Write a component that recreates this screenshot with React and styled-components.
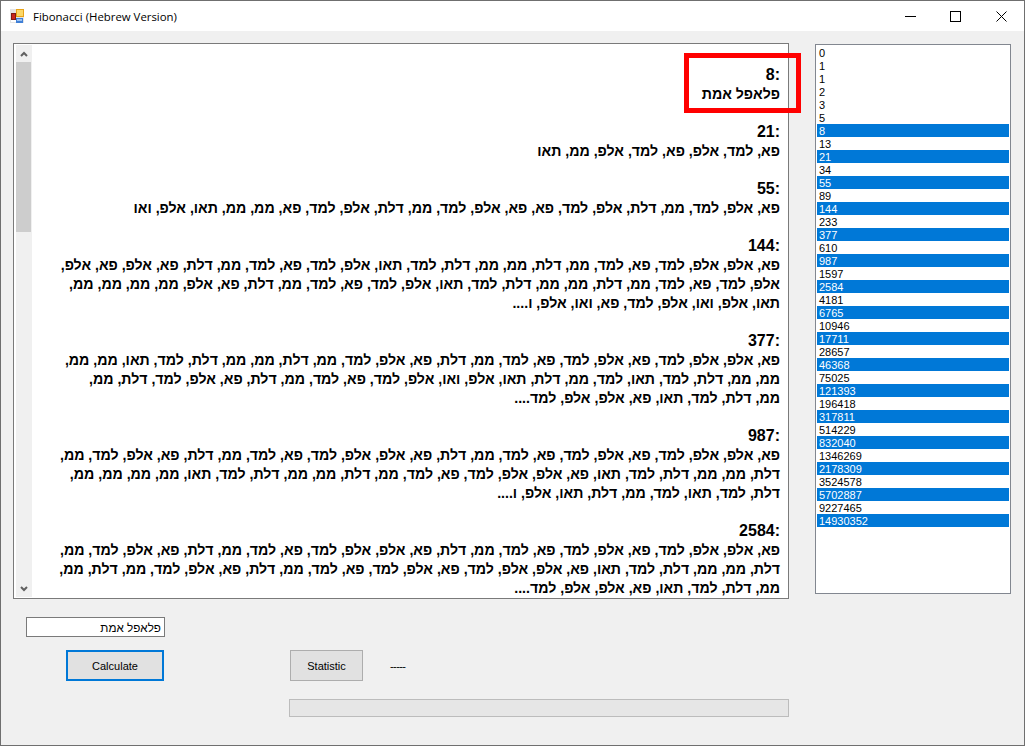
import React from 'react';
import styled, { createGlobalStyle } from 'styled-components';

const Global = createGlobalStyle`
  html, body { margin: 0; padding: 0; background: #f0f0f0; }
  * { box-sizing: border-box; }
`

const Win = styled.div`
  position: relative;
  width: 1025px;
  height: 746px;
  border: 1px solid #6f6f6f;
  background: #f0f0f0;
  overflow: hidden;
  font-family: "Liberation Sans", Arial, sans-serif;
  color: #000;
`
const TitleBar = styled.div`
  height: 30px;
  background: #fff;
  display: flex;
  align-items: center;
  padding-left: 9px;
`
const Title = styled.span`
  font-family: "Open Sans", sans-serif;
  font-size: 11.4px;
  margin-left: 9px;
  flex: 1;
`
const WinButton = styled.div`
  width: 45.5px;
  height: 30px;
  display: flex;
  align-items: center;
  justify-content: center;
`
const Content = styled.div`
  padding: 12px 0 0 12px;
`
const MainRow = styled.div`
  display: flex;
  align-items: flex-start;
`
const RichBox = styled.div`
  width: 776px;
  height: 556px;
  border: 1px solid #7a7a7a;
  background: #fff;
  display: flex;
  overflow: hidden;
`
const ScrollBar = styled.div`
  width: 16px;
  margin: 1px 0 1px 2px;
  flex: none;
  display: flex;
  flex-direction: column;
  background: #f0f0f0;
`
const ScrollArrow = styled.div`
  height: 17px;
  flex: none;
  display: flex;
  align-items: center;
  justify-content: center;
`
const ScrollThumb = styled.div`
  height: 170px;
  width: 15px;
  flex: none;
  background: #cdcdcd;
`
const ScrollTrack = styled.div`
  flex: 1;
`
const Paper = styled.div`
  flex: 1;
  min-width: 0;
  overflow: hidden;
  padding: 21px 8px 0 0;
  font-weight: bold;
  line-height: 19px;
  white-space: nowrap;
  text-align: right;
`
const Block = styled.div`
  margin-bottom: 19px;
`
const Heading = styled.div`
  height: 19px;
  font-size: 16px;
`
const Line = styled.div`
  height: 19px;
  line-height: 21px;
  font-size: 14.15px;
`
const ListBox = styled.div`
  width: 196px;
  height: 550px;
  margin: 1px 0 0 26px;
  border: 1px solid #828790;
  background: #fff;
  padding: 1px;
  font-size: 11px;
`
const ListItem = styled.div`
  height: 13px;
  line-height: 14px;
  padding-left: 2px;
  background: ${p => (p.$selected ? '#0078d7' : 'transparent')};
  color: ${p => (p.$selected ? '#fff' : '#000')};
`
const NameInput = styled.input`
  display: block;
  width: 139px;
  height: 20px;
  margin: 18px 0 0 13px;
  padding: 0 3px;
  border: 1px solid #7a7a7a;
  background: #fff;
  font-family: "Liberation Sans", sans-serif;
  font-size: 11.7px;
  color: #000;
  outline: none;
`
const ButtonRow = styled.div`
  display: flex;
  align-items: center;
  margin-top: 13px;
`
const Button = styled.button`
  height: 31px;
  width: ${p => p.$width}px;
  margin-left: ${p => p.$left}px;
  border: ${p => (p.$focused ? '2px solid #0078d7' : '1px solid #adadad')};
  background: #e1e1e1;
  padding: 0;
  font-family: "Liberation Sans", sans-serif;
  font-size: 11px;
  color: #000;
`
const Dashes = styled.span`
  margin-left: 27px;
  font-size: 11px;
  letter-spacing: -0.6px;
`
const Progress = styled.div`
  width: 500px;
  height: 18px;
  margin: 18px 0 0 276px;
  border: 1px solid #bcbcbc;
  background: #e6e6e6;
`
const RedMark = styled.div`
  position: absolute;
  left: 683px;
  top: 52px;
  width: 117px;
  height: 60px;
  border: 5px solid #ff0000;
`

const blocks = [
  [':8', 'פלאפל אמת'],
  [':21', 'פא, למד, אלפ, פא, למד, אלפ, ממ, תאו'],
  [':55', 'פא, אלפ, למד, ממ, דלת, אלפ, למד, פא, פא, אלפ, למד, ממ, דלת, אלפ, למד, פא, ממ, ממ, תאו, אלפ, ואו'],
  [':144',
    'פא, אלפ, אלפ, למד, פא, למד, ממ, דלת, ממ, ממ, דלת, למד, תאו, אלפ, למד, פא, למד, ממ, דלת, פא, אלפ, פא, אלפ,',
    'אלפ, למד, פא, למד, ממ, דלת, ממ, ממ, דלת, למד, תאו, אלפ, למד, פא, למד, ממ, דלת, פא, אלפ, ממ, ממ, ממ, ממ,',
    'תאו, אלפ, ואו, אלפ, למד, פא, ואו, אלפ, ו....'],
  [':377',
    'פא, אלפ, אלפ, למד, פא, אלפ, למד, פא, למד, ממ, דלת, פא, אלפ, למד, ממ, דלת, ממ, ממ, דלת, למד, תאו, ממ, ממ,',
    'ממ, ממ, דלת, למד, תאו, למד, ממ, דלת, תאו, אלפ, ואו, אלפ, למד, פא, למד, ממ, דלת, פא, אלפ, למד, דלת, ממ,',
    'ממ, דלת, למד, תאו, פא, אלפ, אלפ, למד....'],
  [':987',
    'פא, אלפ, אלפ, למד, פא, אלפ, למד, פא, למד, ממ, דלת, פא, אלפ, אלפ, למד, פא, למד, ממ, דלת, פא, אלפ, למד, ממ,',
    'דלת, ממ, ממ, דלת, למד, תאו, פא, אלפ, אלפ, למד, פא, למד, ממ, דלת, ממ, ממ, דלת, למד, תאו, ממ, ממ, ממ, ממ,',
    'דלת, למד, תאו, למד, ממ, דלת, תאו, אלפ, ו....'],
  [':2584',
    'פא, אלפ, אלפ, למד, פא, אלפ, למד, פא, למד, ממ, דלת, פא, אלפ, אלפ, למד, פא, למד, ממ, דלת, פא, אלפ, למד, ממ,',
    'דלת, ממ, ממ, דלת, למד, תאו, פא, אלפ, אלפ, למד, פא, אלפ, למד, פא, למד, ממ, דלת, פא, אלפ, למד, ממ, דלת, ממ,',
    'ממ, דלת, למד, תאו, פא, אלפ, אלפ, למד....'],
];

const fibs = [0, 1];
while (fibs.length < 37) fibs.push(fibs[fibs.length - 1] + fibs[fibs.length - 2]);

function AppIcon() {
  return (
    <svg width="14" height="14" viewBox="0 0 14 14">
      <rect x="0" y="0" width="14" height="14" fill="#e4e4e4" />
      <rect x="1" y="4" width="5" height="9" fill="#fff" />
      <rect x="1.5" y="4.5" width="4" height="6" fill="#c8251d" stroke="#7d1a14" />
      <rect x="6" y="0" width="8" height="8" fill="#e8a317" />
      <rect x="7" y="1" width="6" height="6" fill="#fbd768" />
      <rect x="6" y="9" width="7" height="5" fill="#3f7fd6" />
      <rect x="7" y="10" width="5" height="2" fill="#9cc2f0" />
    </svg>
  );
}

function Chevron({ down }) {
  return (
    <svg width="8" height="6" viewBox="0 0 8 6">
      <path d={down ? 'M1 1 L4 4 L7 1' : 'M1 5 L4 2 L7 5'} fill="none" stroke="#606060" strokeWidth="2" />
    </svg>
  );
}

export default function App() {
  return (
    <Win>
      <Global />
      <TitleBar>
        <AppIcon />
        <Title>Fibonacci (Hebrew Version)</Title>
        <WinButton>
          <svg width="11" height="11" viewBox="0 0 11 11"><path d="M0 5.5 H11" stroke="#000" /></svg>
        </WinButton>
        <WinButton>
          <svg width="11" height="11" viewBox="0 0 11 11"><rect x="0.5" y="0.5" width="10" height="10" fill="none" stroke="#000" /></svg>
        </WinButton>
        <WinButton>
          <svg width="11" height="11" viewBox="0 0 11 11"><path d="M0.5 0.5 L10.5 10.5 M10.5 0.5 L0.5 10.5" stroke="#000" /></svg>
        </WinButton>
      </TitleBar>
      <Content>
        <MainRow>
          <RichBox>
            <ScrollBar>
              <ScrollArrow><Chevron /></ScrollArrow>
              <ScrollThumb />
              <ScrollTrack />
              <ScrollArrow><Chevron down /></ScrollArrow>
            </ScrollBar>
            <Paper dir="rtl">
              {blocks.map(([head, ...lines]) => (
                <Block key={head}>
                  <Heading>{head}</Heading>
                  {lines.map((line, i) => <Line key={i}>{line}</Line>)}
                </Block>
              ))}
            </Paper>
          </RichBox>
          <ListBox>
            {fibs.map((n, i) => (
              <ListItem key={i} $selected={i >= 6 && i % 2 === 0}>{n}</ListItem>
            ))}
          </ListBox>
        </MainRow>
        <NameInput dir="rtl" readOnly value="פלאפל אמת" />
        <ButtonRow>
          <Button $focused $width={98} $left={53}>Calculate</Button>
          <Button $width={73} $left={126}>Statistic</Button>
          <Dashes>-----</Dashes>
        </ButtonRow>
        <Progress />
      </Content>
      <RedMark />
    </Win>
  );
}
